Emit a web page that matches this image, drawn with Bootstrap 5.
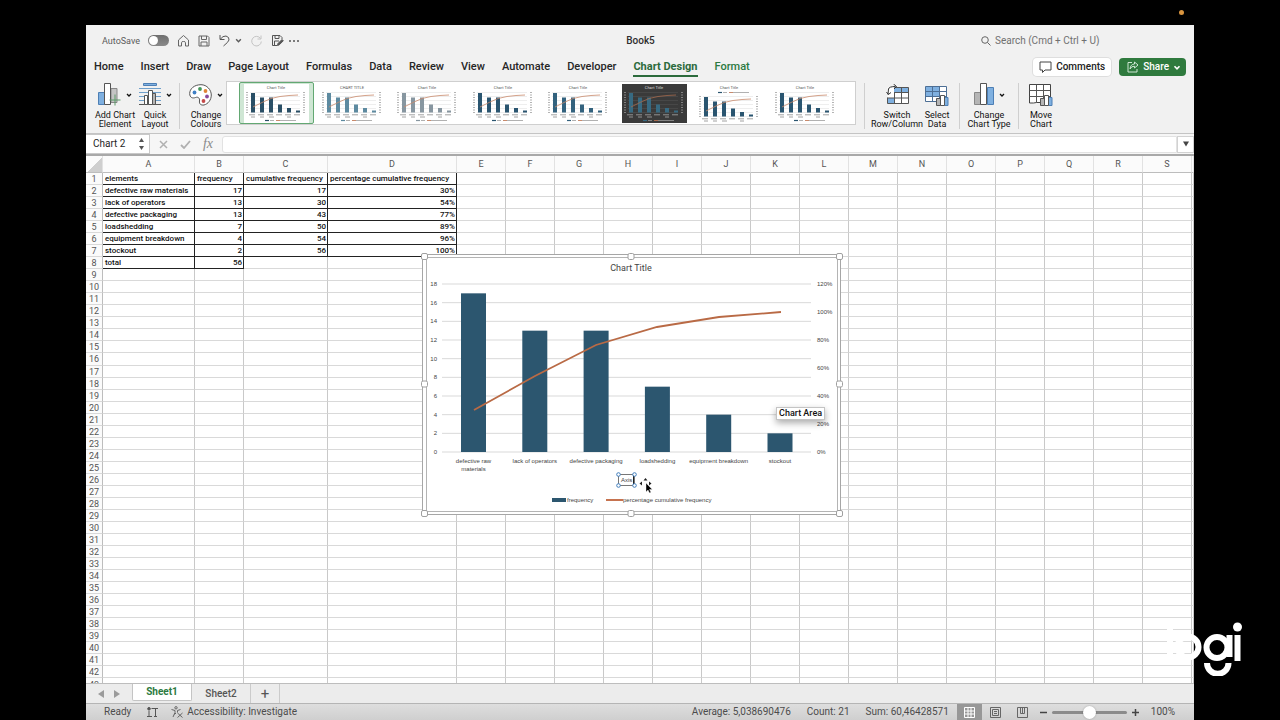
<!DOCTYPE html>
<html lang="en">
<head>
<meta charset="utf-8">
<meta name="viewport" content="width=device-width, initial-scale=1">
<title>Book5</title>
<link rel="stylesheet" href="https://cdn.jsdelivr.net/npm/bootstrap@5.3.0/dist/css/bootstrap.min.css">
<style>
body{background:#000;font-family:Roboto,"Liberation Sans",sans-serif;font-size:9px;line-height:12px;color:#262626}
button,input{font:inherit;color:inherit}
svg{display:block;flex:none}
.screen{padding:25px 86px 0}
.cam-dot{position:absolute;top:10px;right:96px;width:5px;height:5px;border-radius:50%;background:#d9953f}
.app{background:#f1f1f1}
.plain{border:0;background:none;padding:0;color:inherit}
.titlebar{height:31px;padding:0 87px 0 16px;color:#5c5c5c}
.side{flex:1 1 0}
.doc-name{font-size:10px;font-weight:500;color:#2e2e2e}
.switch-off{appearance:none;width:21px;height:11px;border-radius:6px;background:linear-gradient(#6f6f6f,#8a8a8a);margin:0;position:relative}
.switch-off::before{content:"";display:block;width:9px;height:9px;margin:1px;border-radius:50%;background:#fff}
.search-box{border:0;background:none;padding:0;width:112px;font-size:10px;outline:0}
.search-box::placeholder{color:#707070;opacity:1}
.tabs-row{height:22px;padding:0 8px}
.rtabs{gap:17px}
.rtab{font-size:11px;font-weight:500;line-height:17px;padding:1px 0 0;color:#262626;text-decoration:none;border-bottom:2px solid transparent;white-space:nowrap}
.rtab.on{color:#2c6b3c;font-weight:700;border-color:#2c6b3c}
.rtab.ctx{color:#2c7a41}
.btn-comments,.btn-share{height:18px;border-radius:4px;font-size:10px;font-weight:500;padding:0 6px;border:0;line-height:18px}
.btn-comments{background:#fff;box-shadow:0 0 0 1px #dedede;color:#222}
.btn-share{background:#2f7a3e;color:#fff;padding:0 5px 0 8px}
.ribbon{height:56px;padding:0 6px 0 7px;border-bottom:1px solid #c4c4c4}
.rbtn{border:0;background:none;padding:5px 0 0;text-align:center;line-height:9px;font-size:9px;font-weight:400;color:#111;white-space:nowrap;display:flex;flex-direction:column;align-items:center;gap:5px}
.rbtn .ico{display:flex;align-items:center;gap:5px;height:23px}
.w-add{width:44px}.w-quick{width:36px}.w-col{width:40px}.w-switch{width:48px}.w-sel{width:32px}.w-type{width:46px}
.sep{width:1px;height:46px;background:#cfcfcf;margin:5px 6px 0}
.gallery{flex:0 1 630px;height:44px;margin-top:3px;background:#fff;border:1px solid #cfcfcf;padding:0 12px}
.thumb{width:75px;height:42px;border:1px solid transparent;background:none;padding:0;display:flex;align-items:center;justify-content:center;color:#2a4f66}
.thumb.on{border-color:#63a873;background:#cfe6d4;border-radius:2px}
.thumb svg{background:#fff;--t:#555;--g:#dcdcdc;--l:#c98a6c}
.thumb .dark{background:#3a3a3a;--t:#ddd;--g:#555;--l:#a5694c}
.fbar{height:22px;background:#f6f6f6;border-bottom:2px solid #a9a9a9}
.namebox{width:64px;background:#fff;border:1px solid #c8c8c8;border-left:0}
.namebox input{border:0;width:52px;padding:0 0 0 7px;font-size:10px;background:none}
.fx{width:72px;color:#b0b0b0;gap:12px}
.fx i{font:italic 14px/16px "Liberation Serif",serif;color:#8a8a8a}
.fline{flex:1;background:#fff;border:1px solid #e2e2e2;border-radius:3px 0 0 3px;height:17px;min-width:0}
.fdrop{width:17px;height:17px;background:#fff;border:1px solid #d2d2d2;padding:0;color:#444;display:flex;align-items:center;justify-content:center}
.grid{position:relative;overflow:hidden;background:#fff;flex:1 1 0;min-height:0}
.cells{table-layout:fixed;width:100%;height:535px;border-collapse:separate;border-spacing:0;cursor:cell}
.cells th,.cells td{padding:1px 1px 0;height:12px;line-height:10px;border:0 solid #d9d9d9;border-right-color:#c9c9c9;border-width:0 1px 1px 0;white-space:nowrap;overflow:hidden}
.cells th{font-weight:400;font-size:9px;text-align:center;color:#555;background:#fbfbfb}
.cells thead th{height:17px;padding:0;border-bottom-color:#bdbdbd;border-right-color:#e2e2e2}
.cells tbody th{padding:1px 0 0;border-right-color:#bdbdbd}
.cells td{font-size:8px;font-weight:500;color:#111}
.cells td.d{border-color:#222;padding:1px 1px 0 2px}
.cells td.n{text-align:right}
.cells .corner{background:linear-gradient(135deg,#fbfbfb 55%,#cfcfcf 55%)}
.chart-box{position:absolute;left:336px;top:98px;width:419px;height:261px}
.chart-box>svg{overflow:visible}
.chart-box text{font-family:"Liberation Sans",sans-serif;font-size:6px;fill:#444}
.chart-box .heading{font-family:Roboto,"Liberation Sans",sans-serif;font-size:9px}
.tip{position:absolute;left:354px;top:153px;background:#fff;border:1px solid #c4c4c4;box-shadow:0 3px 7px #0005;padding:0 2px;line-height:11px;font-size:9px;font-weight:500;color:#111;white-space:nowrap}
.sheetbar{height:20px;background:#ececec;border-top:1px solid #bdbdbd;font-size:10px;font-weight:500;color:#555}
.stab{width:59px;border:0;background:none;border-right:1px solid #cbcbcb;padding:0}
.stab.on{width:60px;background:#fff;color:#2c7a41;font-weight:700;border:1px solid #c4c4c4;border-top:0;margin-bottom:2px;border-radius:0 0 2px 2px}
.stab.add{width:29px;font-size:15px;font-weight:400}
.sheet-nav{width:46px;color:#9b9b9b}
.status{height:17px;background:linear-gradient(#dedede,#cfcfcf);border-top:1px solid #b5b5b5;color:#4c4c4c;padding:0 19px 0 18px;font-size:10px;white-space:nowrap}
.view{width:27px;border:0;background:none;padding:0;display:flex;align-items:center;justify-content:center;color:#666}
.view.on{width:25px;background:#979797;color:#fff}
.zoomer{appearance:none;width:75px;height:12px;background:none;margin:0 5px}
.zoomer+button{margin-right:12px}
.zoomer::-webkit-slider-runnable-track{height:3px;border-radius:2px;background:#8b8b8b}
.zoomer::-webkit-slider-thumb{appearance:none;width:13px;height:13px;margin-top:-5px;border-radius:50%;background:#fff;box-shadow:0 0 2px #0004}
.watermark{position:absolute;right:38px;bottom:44px}
</style>
</head>
<body>
<svg width="0" height="0" class="position-absolute" aria-hidden="true">
<defs>
<symbol id="mini" viewBox="0 0 65 39">
<path d="M6 8.5H56M6 12.500H56M6 16.500H56M6 20.500H56M6 24.500H56M6 28.500H56" stroke="var(--g)" stroke-width=".5"/>
<path d="M7 9h4v19.500H7zM16 13.500h4v15H16zM25 13.500h4v15H25zM34 20.500h4v8H34zM43 24h4v4.500H43zM52 26.500h4v2H52z" fill="currentColor"/>
<path d="M9 23L18 18.500L27 14.500L36 12.500L45 11.500L54 11" fill="none" stroke="var(--l)" stroke-width=".8"/>
<path d="M3 8v21M60 8v21" stroke="var(--t)" stroke-width="1.600" stroke-dasharray="1 1.500" opacity=".55"/>
<path d="M5 30.800h53M7 33h4M16 33h4M25 33h5M43 33h4" stroke="var(--t)" stroke-dasharray="6 3" opacity=".6" stroke-width=".9"/>
</symbol>
<symbol id="key" viewBox="0 0 65 3">
<path d="M21 1.500h4" stroke="currentColor" stroke-width="1.200"/><path d="M26 1.500h4M36 1.500h16" stroke="var(--t)" opacity=".5" stroke-width=".9"/><path d="M32 1.500h4" stroke="var(--l)"/>
</symbol>
<symbol id="chev" viewBox="0 0 6 4"><path d="M1 1l2 2 2-2" fill="none" stroke="currentColor" stroke-width="1.300"/></symbol>
<symbol id="bars" viewBox="0 0 20 23"><path d="M.5 9.500h6v12h-6z" fill="#b5b5b5" stroke="#888"/><path d="M13.500 4.500h6v17h-6z" fill="#7fb0e0" stroke="#4d7fb5"/><path d="M6.500.500h6v21h-6z" fill="#fff" stroke="#555"/></symbol>
</defs>
</svg>
<span class="cam-dot"></span>
<div class="screen vh-100 overflow-hidden">
<main class="app h-100 d-flex flex-column">
  <header class="titlebar d-flex align-items-center">
    <div class="side d-flex align-items-center">
      <label for="autosave" class="me-2">AutoSave</label>
      <input id="autosave" type="checkbox" role="switch" class="switch-off">
      <button class="plain ms-2" aria-label="Home"><svg width="13" height="13" viewBox="0 0 13 13" fill="none" stroke="#666"><path d="M1.500 6L6.500 1.500 11.500 6V12H8.500V8.500Q8.500 7.500 6.500 7.500T4.500 8.500V12H1.500z"/></svg></button>
      <button class="plain ms-2" aria-label="Save"><svg width="12" height="12" viewBox="0 0 12 12" fill="none" stroke="#666"><path d="M1 1h8.500L11 2.500V11H1zM3.500 1v3.500h5V1M3 11V7h6v4"/></svg></button>
      <button class="plain ms-2" aria-label="Undo"><svg width="13" height="13" viewBox="0 0 13 13" fill="none" stroke="#555"><path d="M2 1v4.500h4.500M2 5.500Q5 1.500 8 2Q11.500 3 11 6Q10.500 8 5.500 12"/></svg></button>
      <button class="plain ms-1" aria-label="Undo list"><svg width="7" height="5"><use href="#chev"/></svg></button>
      <button class="plain ms-2" aria-label="Redo"><svg width="13" height="13" viewBox="0 0 13 13" fill="none" stroke="#c4c4c4"><path d="M11 1.500V5H7.500M10.500 4.500A4.800 4.800 0 1 0 11.300 7.500"/></svg></button>
      <button class="plain ms-2" aria-label="Save as"><svg width="13" height="13" viewBox="0 0 13 13" fill="none" stroke="#555"><path d="M6 11.500H1.500v-10H9L11 3.500V5M4 1.500v3h4v-3M3.500 11V7H8"/><path d="M6.500 11.500l.5-2 4-4 1.300 1.300-4 4z" fill="#555"/></svg></button>
      <button class="plain ms-1" aria-label="More"><svg width="12" height="4" viewBox="0 0 12 4" fill="#555"><circle cx="2" cy="2" r="1"/><circle cx="6" cy="2" r="1"/><circle cx="10" cy="2" r="1"/></svg></button>
    </div>
    <div class="doc-name ps-5 ms-4">Book5</div>
    <div class="side d-flex align-items-center justify-content-end gap-1">
      <svg width="10" height="10" viewBox="0 0 10 10" fill="none" stroke="#666"><circle cx="4" cy="4" r="3.300"/><path d="M6.500 6.500L9.500 9.500"/></svg>
      <input class="search-box" type="text" aria-label="Search" placeholder="Search (Cmd + Ctrl + U)">
    </div>
  </header>
  <div class="tabs-row d-flex align-items-center justify-content-between">
    <nav class="rtabs d-flex">
      <a class="rtab" href="#">Home</a><a class="rtab" href="#">Insert</a><a class="rtab" href="#">Draw</a><a class="rtab" href="#">Page Layout</a><a class="rtab" href="#">Formulas</a><a class="rtab" href="#">Data</a><a class="rtab" href="#">Review</a><a class="rtab" href="#">View</a><a class="rtab" href="#">Automate</a><a class="rtab" href="#">Developer</a><a class="rtab on" href="#">Chart Design</a><a class="rtab ctx" href="#">Format</a>
    </nav>
    <div class="d-flex gap-2">
      <button class="btn-comments d-flex align-items-center gap-1"><svg width="13" height="12" viewBox="0 0 13 12" fill="none" stroke="#444"><path d="M1 1h11v8H6L3.500 11.500V9H1z"/></svg>Comments</button>
      <button class="btn-share d-flex align-items-center gap-1"><svg width="12" height="12" viewBox="0 0 12 12" fill="none" stroke="#cfe6d4"><path d="M5 1.500H1v9.500h9V8M7.500 1l3.500 3-3.500 3V5.200Q4.500 5 3 8Q3.500 3.200 7.500 3z"/></svg>Share <svg width="8" height="5"><use href="#chev"/></svg></button>
    </div>
  </div>
  <div class="ribbon d-flex align-items-start">
    <button class="rbtn w-add"><span class="ico"><svg width="23" height="23" viewBox="0 0 23 23"><path d="M.5 9.500h6v12h-6z" fill="#7fb0e0" stroke="#4d7fb5"/><path d="M13 5.500h6v14h-6z" fill="#c4c4c4" stroke="#888"/><path d="M6.500.500h6v21h-6z" fill="#fff" stroke="#555"/><path d="M17 11.500v11M11.500 17h11" stroke="#5b9a68"/></svg><svg width="6" height="4"><use href="#chev"/></svg></span><span>Add Chart<br>Element</span></button>
    <button class="rbtn w-quick"><span class="ico"><svg width="22" height="23" viewBox="0 0 22 23"><path d="M4.500.500h13v2h-13z" fill="#7fb0e0" stroke="#4d7fb5"/><path d="M0 5.500h22M0 9.500h22M0 13.500h22M0 17.500h22" stroke="#6f9fca"/><path d="M0 21.500h22" stroke="#555"/><path d="M5.500 12.500h3v9h-3z" fill="#fff" stroke="#555"/><path d="M9.500 7.500h4v14h-4z" fill="#fff" stroke="#555"/><path d="M13.500 10.500h3v11h-3z" fill="#b5b5b5" stroke="#555"/></svg><svg width="6" height="4"><use href="#chev"/></svg></span><span>Quick<br>Layout</span></button>
    <div class="sep"></div>
    <button class="rbtn w-col"><span class="ico"><svg width="23" height="22" viewBox="0 0 23 22"><path d="M12 .7C5 .7.7 5 .7 9.500S4 14.500 6.500 13.500 11 14 10.500 17 12 21.500 15 21C19 20 22.300 16 22.300 11S18 .7 12 .7z" fill="#fff" stroke="#555"/><circle cx="5.500" cy="8.500" r="1.900" fill="#3f7fc4"/><circle cx="11" cy="5" r="1.900" fill="#43985a"/><circle cx="16.500" cy="7" r="1.900" fill="#e08438"/><circle cx="18" cy="12.500" r="1.900" fill="#884a9c"/><circle cx="14.500" cy="17" r="1.900" fill="#c44a4a"/></svg><svg width="6" height="4"><use href="#chev"/></svg></span><span>Change<br>Colours</span></button>
    <div class="gallery d-flex justify-content-between" id="gallery"></div>
    <div class="sep mx-2"></div>
    <button class="rbtn w-switch"><span class="ico"><svg width="23" height="21" viewBox="0 0 23 21"><path d="M1.500 3.500h21v16h-21z" fill="#fff"/><path d="M8 3.500h14.500v5H8zM1.500 14h7v5.500h-7z" fill="#7fb0e0"/><path d="M8.500 3.500h14v16h-21v-6M1.500 14h21M8.500 8.500h14M8.500 8v11.500M15.500 3.500v16" fill="none" stroke="#555"/><path d="M2 10.500L2.500 5Q3 2.500 9.500 2.500M.5 8l1.800 2.500L5 8.500M7.500 0l3 2.500L8 5" fill="none" stroke="#333"/></svg></span><span>Switch<br>Row/Column</span></button>
    <button class="rbtn w-sel"><span class="ico"><svg width="24" height="22" viewBox="0 0 24 22"><path d="M.5 2.500h21v15H.500z" fill="#fff"/><path d="M.5 2.500h14v10H.500z" fill="#7fb0e0"/><path d="M.5 2.500h21v15H.500zM.500 7.500h21M.500 12.500h21M7.500 2.500v15M14.500 2.500v15" fill="none" stroke="#4d6f95"/><path d="M11.500 14.500h4v7h-4z" fill="#b5b5b5" stroke="#555"/><path d="M19.500 13.500h3.500v8h-3.500z" fill="#7fb0e0" stroke="#4d7fb5"/><path d="M15.500 11.500h4v10h-4z" fill="#fff" stroke="#555"/></svg></span><span>Select<br>Data</span></button>
    <div class="sep"></div>
    <button class="rbtn w-type"><span class="ico"><svg width="20" height="23"><use href="#bars"/></svg><svg width="6" height="4"><use href="#chev"/></svg></span><span>Change<br>Chart Type</span></button>
    <div class="sep"></div>
    <button class="rbtn w-sel"><span class="ico"><svg width="24" height="22" viewBox="0 0 24 22"><path d="M.5.500h21v18H7.500L4.500 19H.500z" fill="#fff" stroke="#444"/><path d="M.5 6.500h21M.500 12.500h21M7.500.500v18M14.500.500v18" stroke="#555"/><path d="M11.500 14.500h4v7h-4z" fill="#b5b5b5" stroke="#555"/><path d="M19.500 13.500h3.500v8h-3.500z" fill="#7fb0e0" stroke="#4d7fb5"/><path d="M15.500 11.500h4v10h-4z" fill="#fff" stroke="#555"/></svg></span><span>Move<br>Chart</span></button>
  </div>
  <div class="fbar d-flex align-items-center">
    <div class="namebox h-100 d-flex align-items-center"><input type="text" aria-label="Name box" value="Chart 2"><svg width="7" height="14" viewBox="0 0 7 14" fill="#555"><path d="M1 5l2.500-4L6 5zM1 9l2.500 4L6 9z"/></svg></div>
    <div class="fx d-flex align-items-center justify-content-center">
      <svg width="9" height="9" viewBox="0 0 9 9" fill="none" stroke="currentColor" stroke-width="1.500"><path d="M1 1l7 7M8 1L1 8"/></svg>
      <svg width="11" height="9" viewBox="0 0 11 9" fill="none" stroke="currentColor" stroke-width="1.800"><path d="M1 5l3 3 6-7"/></svg>
      <i>fx</i>
    </div>
    <input class="fline" type="text" aria-label="Formula">
    <button class="fdrop" aria-label="Expand"><svg width="6" height="6" viewBox="0 0 6 6" fill="currentColor"><path d="M0 .5h6L3 5.500z"/></svg></button>
  </div>
  <section class="grid">
    <table class="cells">
      <colgroup id="cg"></colgroup>
      <thead><tr id="heads"><th class="corner"></th></tr></thead>
      <tbody id="rows"></tbody>
    </table>
    <div class="chart-box">
      <svg width="419" height="261" viewBox="0 0 419 261">
        <path d="M.5.500h418v260H.500z" fill="#fff" stroke="#a6a6a6"/><path d="M4.500 3.500h411v254H4.500z" fill="#fff" stroke="#b4b4b4"/>
        <text class="heading" x="209" y="17" text-anchor="middle">Chart Title</text>
        <g id="plot"></g>
        <path d="M52 156L113 122L174 91L235 73L297 63L359 58" fill="none" stroke="#b96a45" stroke-width="1.800"/>
        <path d="M130 246h14" stroke="#2c566f" stroke-width="4"/><text x="145" y="248">frequency</text>
        <path d="M184 246h17" stroke="#c0643c" stroke-width="1.800"/><text x="201" y="248">percentage cumulative frequency</text>
        <path d="M196.500 220.500h16v11h-16z" fill="#fff" stroke="#777"/><text x="199" y="228">Axis</text>
        <path d="M211.500 221v10" stroke="#222"/>
        <g fill="#fff" stroke="#3f7dbd"><circle cx="196.500" cy="220.500" r="1.800"/><circle cx="212.500" cy="220.500" r="1.800"/><circle cx="196.500" cy="231.500" r="1.800"/><circle cx="212.500" cy="231.500" r="1.800"/></g>
        <g fill="#fff" stroke="#a0a0a0"><rect x="-.5" y="-.5" width="6" height="6" rx="1.500"/><rect x="206" y="-.5" width="6" height="6" rx="1.500"/><rect x="414.500" y="-.5" width="6" height="6" rx="1.500"/><rect x="-.5" y="127" width="6" height="6" rx="1.500"/><rect x="414.500" y="127" width="6" height="6" rx="1.500"/><rect x="-.5" y="256.500" width="6" height="6" rx="1.500"/><rect x="206" y="256.500" width="6" height="6" rx="1.500"/><rect x="414.500" y="256.500" width="6" height="6" rx="1.500"/></g>
        <g fill="#222"><path d="M221.500 226.500l2-2.500 2 2.500zM220 227.500l-2.500 2 2.500 2zM227 227.500l2.500 2-2.500 2z"/><path d="M224 229v9l2-2 1.500 3 1.500-.700-1.500-2.800h2.800z" fill="#000" stroke="#fff" stroke-width=".4"/></g>
      </svg>
      <div class="tip" role="tooltip">Chart Area</div>
    </div>
  </section>
  <nav class="sheetbar d-flex">
    <div class="sheet-nav d-flex align-items-center justify-content-center gap-2"><button class="plain" aria-label="Previous sheet"><svg width="8" height="8" viewBox="0 0 8 8" fill="currentColor"><path d="M7 0v8L1 4z"/></svg></button><button class="plain" aria-label="Next sheet"><svg width="8" height="8" viewBox="0 0 8 8" fill="currentColor"><path d="M1 0v8l6-4z"/></svg></button></div>
    <button class="stab on">Sheet1</button><button class="stab">Sheet2</button><button class="stab add" aria-label="Add sheet">+</button>
  </nav>
  <footer class="status d-flex align-items-center">
    <span>Ready</span>
    <svg class="ms-3" width="12" height="11" viewBox="0 0 12 11" fill="none" stroke="#555"><circle cx="2" cy="1.800" r="1.300" fill="#555"/><path d="M4.500 1.500H11M8.500 1.500v8.500M2 4v5.500M0 9.500h5M7 9.500h3"/></svg>
    <button class="plain ms-2 ps-1 d-flex align-items-center gap-1"><svg width="12" height="12" viewBox="0 0 12 12" fill="none" stroke="#666"><circle cx="5" cy="1.800" r="1.200"/><path d="M.5 3.500L4 4.500v2L2 11M9.500 3.500L6.500 4.500v2M3.500 8.500L5 7M6.500 7l5 4.500M11.500 7l-5 4.500"/></svg>Accessibility: Investigate</button>
    <span class="ms-auto me-3">Average: 5,038690476</span><span class="me-3">Count: 21</span><span class="me-2">Sum: 60,46428571</span>
    <button class="view on align-self-stretch" aria-label="Normal view"><svg width="11" height="11" viewBox="0 0 11 11" fill="none" stroke="currentColor"><path d="M.5.500h10v10H.500zM.500 4h10M.500 7h10M4 .500v10M7 .500v10"/></svg></button>
    <button class="view" aria-label="Page layout view"><svg width="11" height="11" viewBox="0 0 11 11" fill="none" stroke="currentColor"><path d="M.5.500h10v10H.500zM2.500 2.500h6v6h-6zM4 4.500h3M4 6.500h3"/></svg></button>
    <button class="view" aria-label="Page break view"><svg width="11" height="11" viewBox="0 0 11 11" fill="none" stroke="currentColor"><path d="M.5.500h10v10H.500zM3.500.500v6h4v-6M5.500.500v6"/></svg></button>
    <button class="plain ms-1" aria-label="Zoom out"><svg width="7" height="7"><path d="M0 3.500h7" stroke="#444" stroke-width="1.500"/></svg></button>
    <input class="zoomer" type="range" aria-label="Zoom" value="50">
    <button class="plain" aria-label="Zoom in"><svg width="7" height="7"><path d="M0 3.500h7M3.500 0v7" stroke="#444" stroke-width="1.500"/></svg></button>
    <span>100%</span>
  </footer>
</main>
</div>
<svg class="watermark" role="img" aria-label="logi" width="77" height="54" viewBox="0 0 77 54" fill="none" stroke="#fff" stroke-width="6"><path d="M5 4v34M72.500 13v26M64.500 13v22"/><circle cx="23" cy="25" r="10.500"/><circle cx="52" cy="25.500" r="10.500"/><path d="M42 41a10.500 10.500 0 0 0 21.500 0"/><circle cx="72.500" cy="5" r="4.500" fill="#fff" stroke="none"/></svg>
<script src="https://cdn.jsdelivr.net/npm/bootstrap@5.3.0/dist/js/bootstrap.bundle.min.js"></script>
<script>
const $ = id => document.getElementById(id);

// Sheet columns: row header, A-D, then E-S at one width; T takes what is left
const widths = [17, 92, 49, 84, 129, ...Array(15).fill(49)];
$('cg').innerHTML = widths.map(w => `<col width="${w}">`).join('') + '<col>';
const letters = 'ABCDEFGHIJKLMNOPQRS'.split('').concat('');
$('heads').innerHTML += letters.map(l => `<th scope="col">${l}</th>`).join('');

const data = [
  ['elements', 'frequency', 'cumulative frequency', 'percentage cumulative frequency'],
  ['defective raw materials', 17, 17, '30%'],
  ['lack of operators', 13, 30, '54%'],
  ['defective packaging', 13, 43, '77%'],
  ['loadshedding', 7, 50, '89%'],
  ['equipment breakdown', 4, 54, '96%'],
  ['stockout', 2, 56, '100%'],
  ['total', 56]
];
let html = '';
for (let r = 0; r < 43; r++) {
  html += `<tr><th scope="row">${r + 1}</th>`;
  for (let c = 0; c < 20; c++) {
    const v = (data[r] || [])[c];
    html += v === undefined ? '<td></td>' : `<td class="d${r && c ? ' n' : ''}">${v}</td>`;
  }
  html += '</tr>';
}
$('rows').innerHTML = html;

// Chart: left axis 0-18, right axis 0-120%
const base = 198, top0 = 30, step = (base - top0) / 18;
let p = '';
for (let v = 0; v <= 18; v += 2) {
  const y = base - v * step;
  p += `<path d="M20 ${y}H389" stroke="#d9d9d9"/><text x="15" y="${y + 2}" text-anchor="end">${v}</text>`;
}
for (let v = 0; v <= 120; v += 20) p += `<text x="395" y="${base + 2 - v * (base - top0) / 120}">${v}%</text>`;
[['defective raw', 17, 'materials'], ['lack of operators', 13], ['defective packaging', 13], ['loadshedding', 7], ['equipment breakdown', 4], ['stockout', 2]]
  .forEach(([name, v, more], i) => {
    const x = 51.5 + i * 61.3;
    p += `<rect x="${x - 12.5}" y="${base - v * step}" width="25" height="${v * step}" fill="#2c566f"/><text x="${x}" y="209" text-anchor="middle">${name}</text>`;
    if (more) p += `<text x="${x}" y="217" text-anchor="middle">${more}</text>`;
  });
$('plot').innerHTML = p;

// Chart style gallery; style 7 carries its legend above the plot
const styles = ['#2a4f66', '#5d8aa0', '#8796a0', '#2a5570', '#33627e', '#376a82', '#2a5570', '#2a5570'];
$('gallery').innerHTML = styles.map((c, i) => `<button class="thumb${i ? '' : ' on'}" aria-label="Style ${i + 1}"><svg class="${i === 5 ? 'dark' : ''}" width="65" height="39" viewBox="0 0 65 39" style="color:${c}"><use href="#mini" width="65" height="39" y="${i === 6 ? 4 : 0}"/><use href="#key" width="65" height="3" y="${i === 6 ? 7 : 35}"/><text x="32" y="5" text-anchor="middle" font-size="4" fill="var(--t)">${i === 1 ? 'CHART TITLE' : 'Chart Title'}</text></svg></button>`).join('');
</script>
</body>
</html>
